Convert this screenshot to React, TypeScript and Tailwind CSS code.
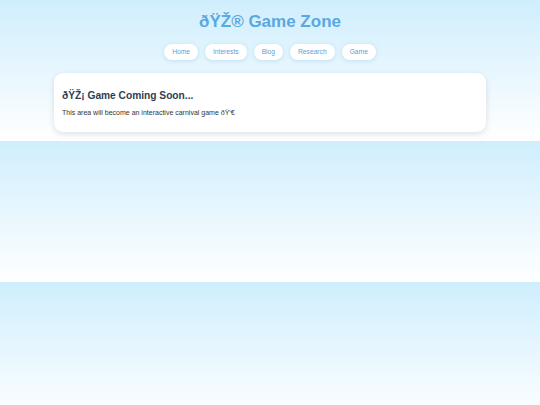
import React from "react";

export default function App() {
  const links = ["Home", "Interests", "Blog", "Research", "Game"];
  return (
    <div
      className="w-[540px] h-[405px] overflow-hidden bg-[linear-gradient(to_bottom,#cfeefd,#ffffff)] bg-[length:100%_141px] bg-repeat"
      style={{ fontFamily: '"Liberation Sans", Arial, sans-serif' }}
    >
      <div className="h-[141px] flex flex-col items-center">
        <h1 className="mt-[11px] text-[17px] leading-[22px] font-bold text-[#5aa8e2]">
          ðŸŽ® Game Zone
        </h1>
        <nav className="mt-[11px] flex gap-[7px]">
          {links.map((l) => (
            <a
              key={l}
              className="h-[16px] px-[8px] flex items-center rounded-full bg-white text-[6.7px] text-[#5b9fd8] shadow-[0_1px_4px_rgba(90,160,220,0.25)]"
            >
              {l}
            </a>
          ))}
        </nav>
        <section className="mt-[13px] w-[432px] h-[59px] rounded-[9px] bg-white shadow-[0_2px_6px_rgba(0,0,0,0.12)] px-[8px] pt-[16px]">
          <h2 className="text-[10.2px] leading-[13px] font-bold text-[#2d3e50]">
            ðŸŽ¡ Game Coming Soon...
          </h2>
          <p className="mt-[6px] text-[7px] leading-[9px] text-[#333]">
            This area will become an interactive carnival game ðŸ‘€
          </p>
        </section>
      </div>
    </div>
  );
}
